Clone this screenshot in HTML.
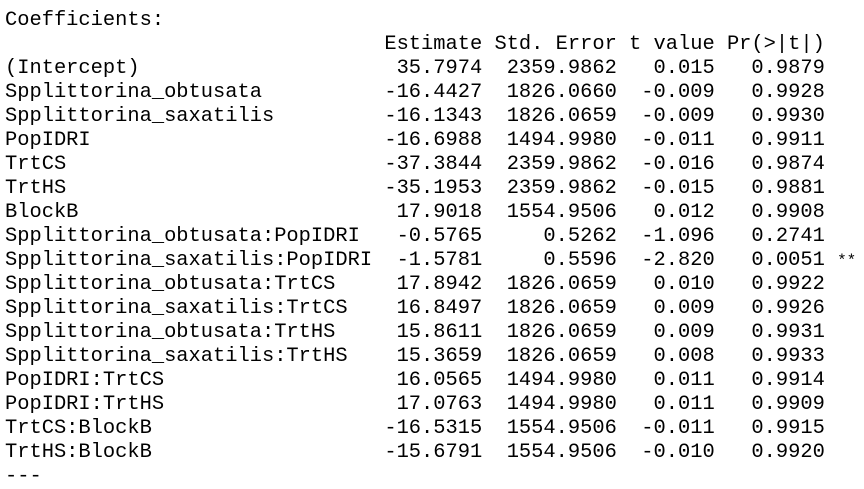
<!DOCTYPE html>
<html><head><meta charset="utf-8"><style>
html,body{margin:0;padding:0;background:#fff;width:864px;height:479px;overflow:hidden}
pre{margin:0;position:absolute;left:5px;top:9px;font-family:"Liberation Mono",monospace;font-size:20.4px;line-height:24px;color:#000;letter-spacing:0}
</style></head><body>
<pre>Coefficients:
                               Estimate Std. Error t value Pr(&gt;|t|)
(Intercept)                     35.7974  2359.9862   0.015   0.9879
Spplittorina_obtusata          -16.4427  1826.0660  -0.009   0.9928
Spplittorina_saxatilis         -16.1343  1826.0659  -0.009   0.9930
PopIDRI                        -16.6988  1494.9980  -0.011   0.9911
TrtCS                          -37.3844  2359.9862  -0.016   0.9874
TrtHS                          -35.1953  2359.9862  -0.015   0.9881
BlockB                          17.9018  1554.9506   0.012   0.9908
Spplittorina_obtusata:PopIDRI   -0.5765     0.5262  -1.096   0.2741
Spplittorina_saxatilis:PopIDRI  -1.5781     0.5596  -2.820   0.0051 <span style="font-size:16px">**</span>
Spplittorina_obtusata:TrtCS     17.8942  1826.0659   0.010   0.9922
Spplittorina_saxatilis:TrtCS    16.8497  1826.0659   0.009   0.9926
Spplittorina_obtusata:TrtHS     15.8611  1826.0659   0.009   0.9931
Spplittorina_saxatilis:TrtHS    15.3659  1826.0659   0.008   0.9933
PopIDRI:TrtCS                   16.0565  1494.9980   0.011   0.9914
PopIDRI:TrtHS                   17.0763  1494.9980   0.011   0.9909
TrtCS:BlockB                   -16.5315  1554.9506  -0.011   0.9915
TrtHS:BlockB                   -15.6791  1554.9506  -0.010   0.9920
---</pre>
</body></html>
